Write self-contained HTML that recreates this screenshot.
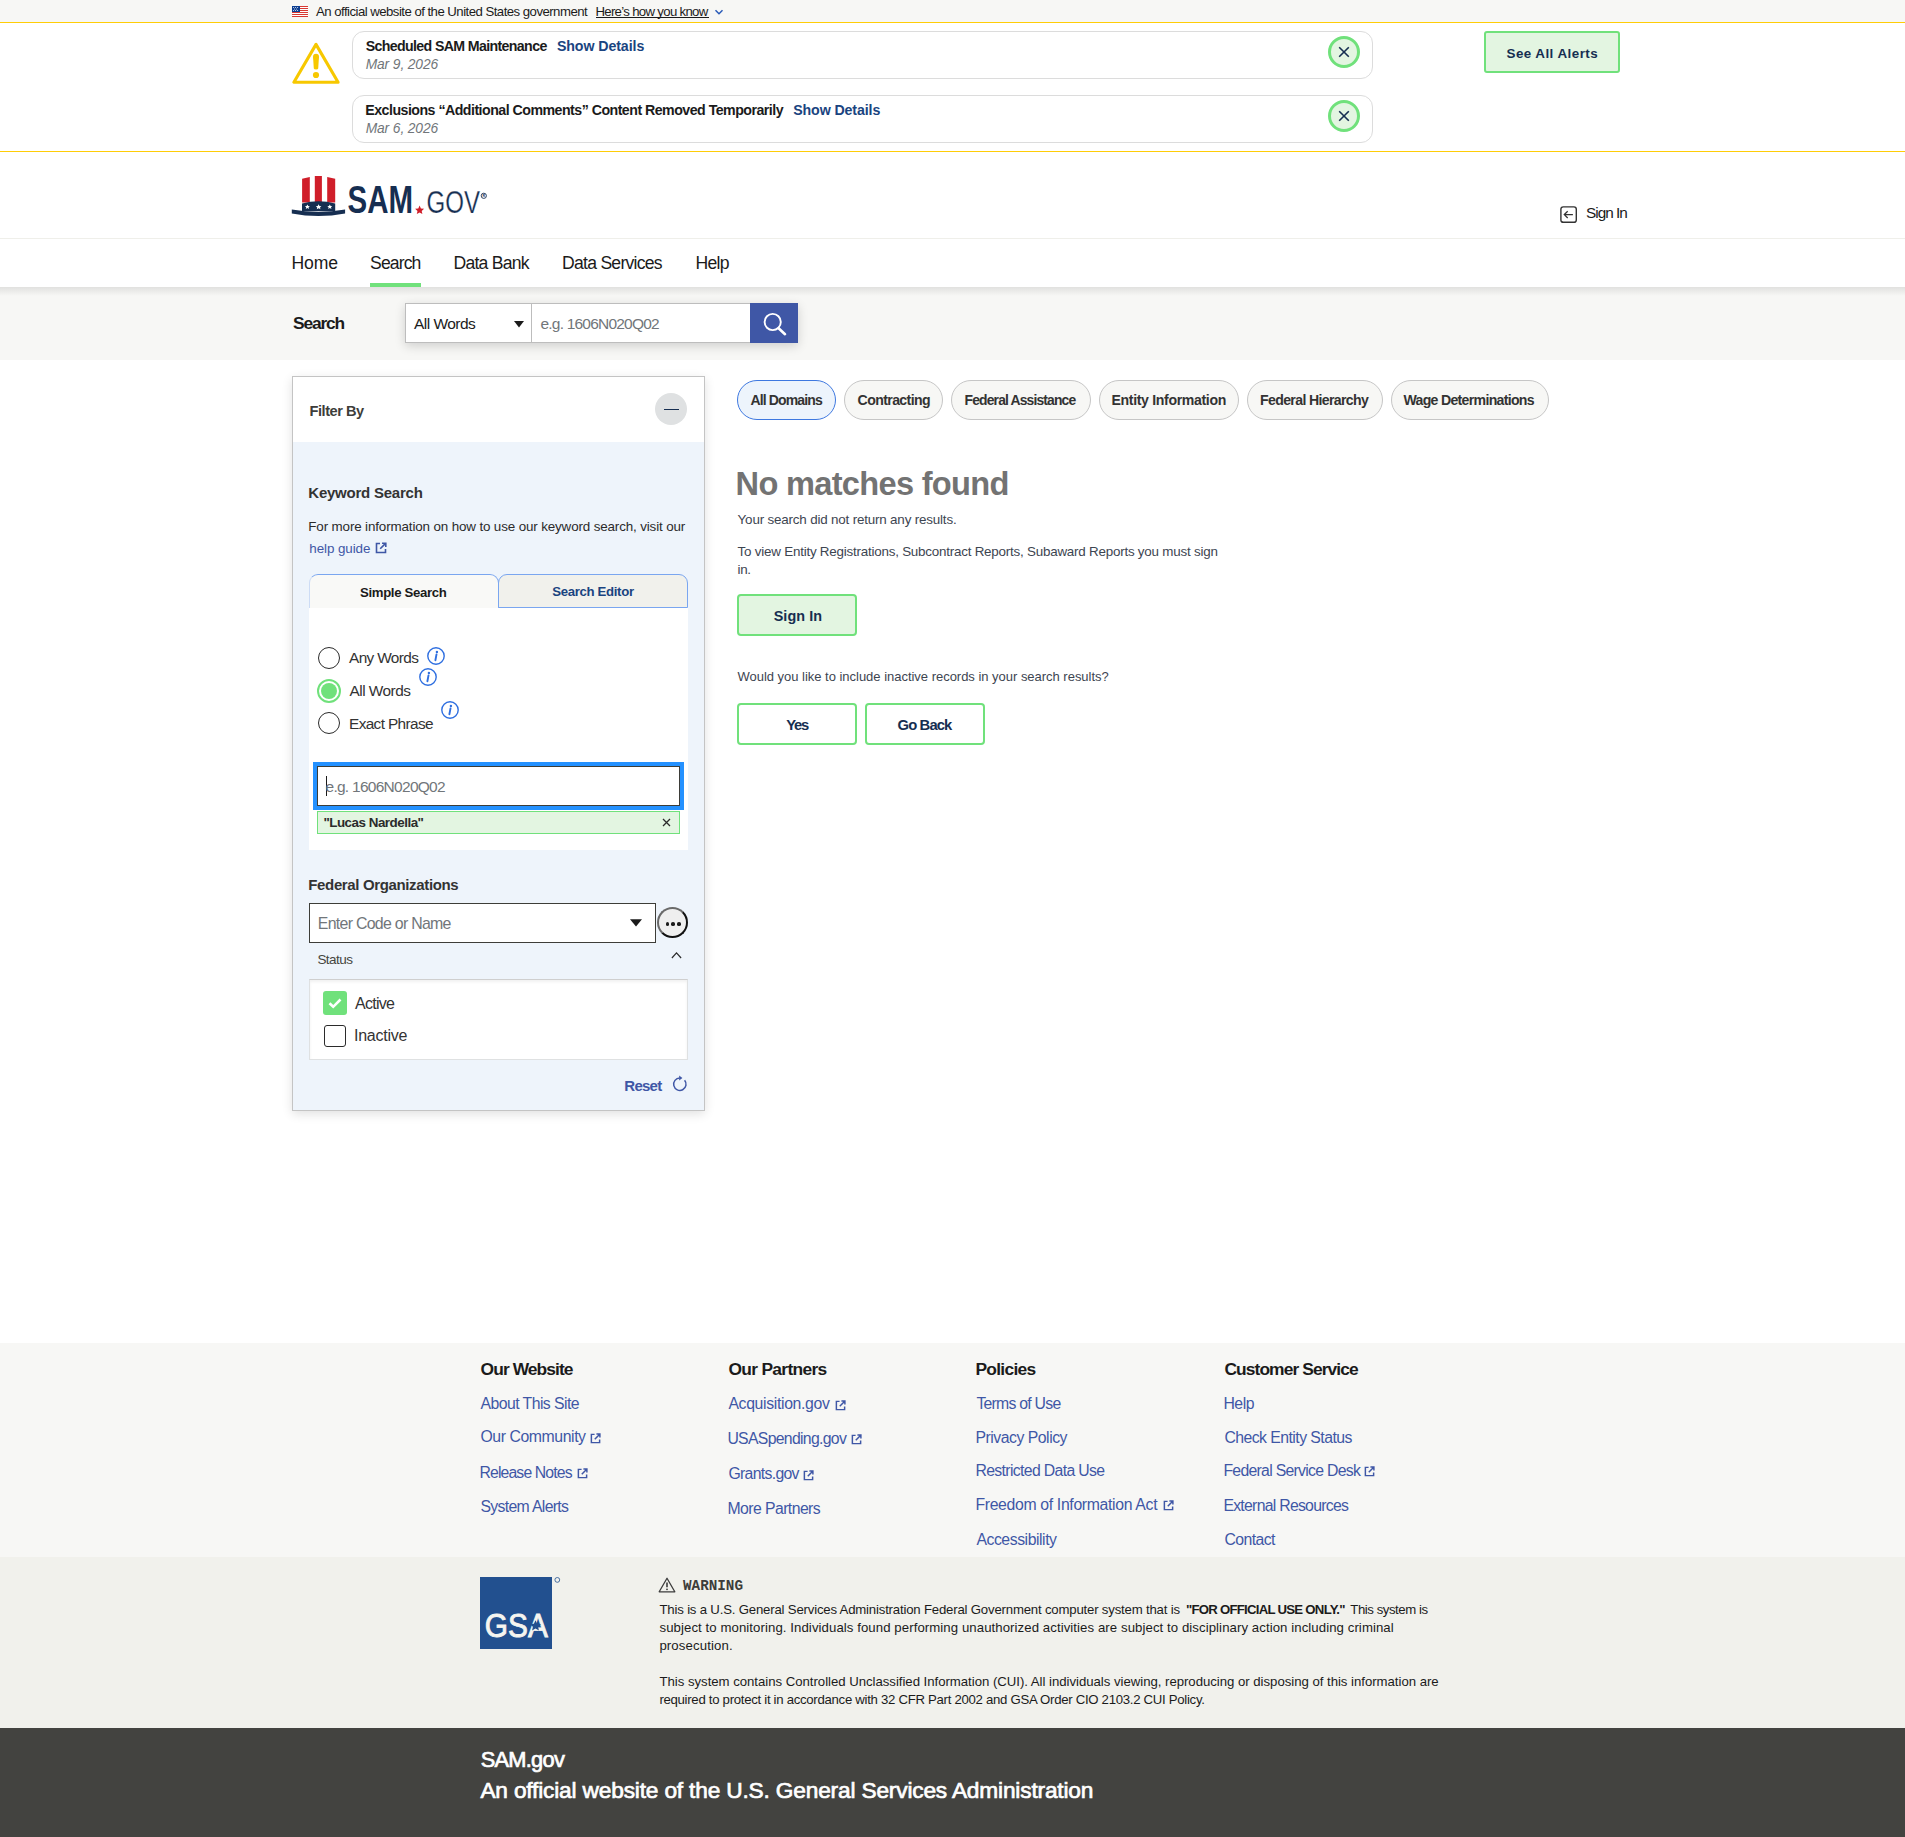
<!DOCTYPE html>
<html><head><meta charset="utf-8"><title>SAM.gov</title>
<style>
html,body{margin:0;padding:0;background:#fff;}
body{width:1905px;height:1837px;position:relative;overflow:hidden;font-family:"Liberation Sans",sans-serif;}
.b,.a,.t{position:absolute;}
.t{white-space:nowrap;}
</style></head><body>
<div class="b" style="left:0;top:0;width:1905px;height:22px;background:#f7f7f5"></div>
<div class="b" style="left:0;top:22px;width:1905px;height:1px;background:#ffcd07"></div>
<div class="b" style="left:0;top:151px;width:1905px;height:1px;background:#ffcd07"></div>
<div class="b" style="left:0;top:238px;width:1905px;height:1px;background:#efefea"></div>
<div class="b" style="left:0;top:287px;width:1905px;height:73px;background:#f7f7f5"></div>
<div class="b" style="left:0;top:287px;width:1905px;height:9px;background:linear-gradient(rgba(0,0,0,0.09),rgba(0,0,0,0))"></div>
<div class="b" style="left:370px;top:283px;width:51px;height:4px;background:#70e17b"></div>
<div class="b" style="left:0;top:1343px;width:1905px;height:214px;background:#f7f7f5"></div>
<div class="b" style="left:0;top:1557px;width:1905px;height:171px;background:#f1f1ec"></div>
<div class="b" style="left:0;top:1728px;width:1905px;height:109px;background:#434340"></div>
<svg class="a" style="left:292px;top:6px" width="16" height="11" viewBox="0 0 16 11"><rect width="16" height="11" fill="#fff"/><g fill="#d83933"><rect y="0" width="16" height="1"/><rect y="2" width="16" height="1"/><rect y="4" width="16" height="1"/><rect y="6" width="16" height="1"/><rect y="8" width="16" height="1"/><rect y="10" width="16" height="1"/></g><rect width="8" height="6" fill="#0b3d91"/><g fill="#fff"><circle cx="1.6" cy="1.4" r=".5"/><circle cx="3.6" cy="1.4" r=".5"/><circle cx="5.6" cy="1.4" r=".5"/><circle cx="2.6" cy="3" r=".5"/><circle cx="4.6" cy="3" r=".5"/><circle cx="1.6" cy="4.6" r=".5"/><circle cx="3.6" cy="4.6" r=".5"/><circle cx="5.6" cy="4.6" r=".5"/></g></svg>
<div class="b" style="left:596px;top:17px;width:113px;height:1px;background:#1b1b1b"></div>
<svg class="a" style="left:714px;top:8px" width="10" height="8" viewBox="0 0 10 8"><path d="M1.5 2.2L5 5.7 8.5 2.2" fill="none" stroke="#2a5bb8" stroke-width="1.5"/></svg>
<svg class="a" style="left:292px;top:42px" width="48" height="42" viewBox="0 0 48 42"><path d="M24 2.4L1.9 40.2H46.1Z" fill="none" stroke="#f7c800" stroke-width="3.1" stroke-linejoin="round"/><path d="M21 14.8Q21 11.8 24 11.8Q27 11.8 27 14.8L26.2 26.6Q26 27.6 24 27.6Q22 27.6 21.8 26.6Z" fill="#f7c800"/><circle cx="24" cy="33" r="3.1" fill="#f7c800"/></svg>
<div class="b" style="left:352px;top:31px;width:1021px;height:48px;border:1.5px solid #dcdcdc;border-radius:12px;box-sizing:border-box;background:#fff"></div>
<div class="b" style="left:1328px;top:36px;width:32px;height:32px;border:3px solid #70e17b;border-radius:50%;box-sizing:border-box;background:#e3f5e1"></div>
<svg class="a" style="left:1338px;top:46px" width="12" height="12" viewBox="0 0 12 12"><path d="M1.2 1.2L10.8 10.8M10.8 1.2L1.2 10.8" stroke="#162e51" stroke-width="1.6"/></svg>
<div class="b" style="left:352px;top:95px;width:1021px;height:48px;border:1.5px solid #dcdcdc;border-radius:12px;box-sizing:border-box;background:#fff"></div>
<div class="b" style="left:1328px;top:100px;width:32px;height:32px;border:3px solid #70e17b;border-radius:50%;box-sizing:border-box;background:#e3f5e1"></div>
<svg class="a" style="left:1338px;top:110px" width="12" height="12" viewBox="0 0 12 12"><path d="M1.2 1.2L10.8 10.8M10.8 1.2L1.2 10.8" stroke="#162e51" stroke-width="1.6"/></svg>
<div class="b" style="left:1484px;top:31px;width:136px;height:42px;border:2px solid #70e17b;border-radius:3px;box-sizing:border-box;background:#e3f5e1"></div>
<svg class="a" style="left:290px;top:172px" width="200" height="48" viewBox="290 172 200 48">
<g fill="#d01e2a"><path d="M302.1 178.8L309.8 176.9V202.5H302.1Z"/><path d="M314.8 176H321.9V202.5H314.8Z"/><path d="M327.2 176.9L335.2 178.8V202.5H327.2Z"/></g>
<path d="M302 211.2V203.5Q318.6 199 335.2 203.5V211.2Z" fill="#162e51"/>
<g fill="#fff"><path d="M307.4 204.4l.8 1.6 1.7.2-1.3 1.1.4 1.7-1.6-.9-1.6.9.4-1.7-1.3-1.1 1.7-.2z"/><path d="M318.6 204.2l.9 1.8 1.9.2-1.4 1.2.4 1.9-1.8-1-1.8 1 .4-1.9-1.4-1.2 1.9-.2z"/><path d="M329.8 204.4l.8 1.6 1.7.2-1.3 1.1.4 1.7-1.6-.9-1.6.9.4-1.7-1.3-1.1 1.7-.2z"/></g>
<path d="M291.8 209.6Q318.5 214.5 345.1 209.6V213.5Q318.5 218.5 291.8 213.5Z" fill="#162e51"/>
<text x="347.6" y="213" font-family="Liberation Sans" font-weight="700" font-size="38.5" fill="#162e51" textLength="65.5" lengthAdjust="spacingAndGlyphs">SAM</text>
<path d="M419.6 205.6l1.3 2.9 3.2.3-2.4 2.1.7 3.1-2.8-1.6-2.8 1.6.7-3.1-2.4-2.1 3.2-.3z" fill="#d01e2a"/>
<text x="426.6" y="213" font-family="Liberation Sans" font-weight="400" font-size="31.5" fill="#162e51" stroke="#fff" stroke-width="0.25" paint-order="normal" textLength="53.5" lengthAdjust="spacingAndGlyphs">GOV</text>
<circle cx="483.8" cy="195.8" r="2.6" fill="none" stroke="#162e51" stroke-width=".9"/><text x="482.6" y="197.4" font-family="Liberation Sans" font-size="3.6" font-weight="700" fill="#162e51">R</text>
</svg>
<svg class="a" style="left:1559px;top:205px" width="20" height="19" viewBox="0 0 20 19"><rect x="1.9" y="1.9" width="15.4" height="15.4" rx="2.4" fill="none" stroke="#333" stroke-width="1.4"/><path d="M13.9 9.6H5.6M8.7 6.2L5.3 9.6 8.7 13" fill="none" stroke="#333" stroke-width="1.3"/></svg>
<div class="b" style="left:405px;top:303px;width:393px;height:40px;box-shadow:0 3px 10px rgba(0,0,0,0.16)"></div>
<div class="b" style="left:405px;top:303px;width:127px;height:40px;border:1px solid #bdbdbd;box-sizing:border-box;background:#fff"></div>
<svg class="a" style="left:513px;top:320px" width="12" height="8" viewBox="0 0 12 8"><path d="M1 1H11L6 7.5Z" fill="#1b1b1b"/></svg>
<div class="b" style="left:531px;top:303px;width:220px;height:40px;border:1px solid #bdbdbd;box-sizing:border-box;background:#fff"></div>
<div class="b" style="left:750px;top:303px;width:48px;height:40px;background:#3f57a6"></div>
<svg class="a" style="left:760px;top:310px" width="30" height="28" viewBox="0 0 30 28"><circle cx="12.7" cy="12" r="8.1" fill="none" stroke="#fff" stroke-width="1.9"/><path d="M18.6 18.2L25 24.2" stroke="#fff" stroke-width="2.6" stroke-linecap="round"/></svg>
<div class="b" style="left:292px;top:376px;width:413px;height:735px;border:1px solid #c4c4c4;box-sizing:border-box;background:#eef4fb;box-shadow:0 3px 10px rgba(0,0,0,0.12)"></div>
<div class="b" style="left:293px;top:377px;width:411px;height:65px;background:#fff"></div>
<div class="b" style="left:655px;top:393px;width:32px;height:32px;border-radius:50%;background:#dfe1e2"></div>
<div class="b" style="left:664px;top:408.5px;width:15px;height:1.6px;background:#162e51"></div>
<svg class="a" style="left:375px;top:542px" width="12" height="12" viewBox="0 0 12 12"><path d="M5 1.5H1.5v9h9V7" fill="none" stroke="#3f57a6" stroke-width="1.6"/><path d="M7 1.2h3.8V5M10.6 1.4L5.2 6.8" fill="none" stroke="#3f57a6" stroke-width="1.6"/></svg>
<div class="b" style="left:309px;top:574px;width:190px;height:34px;border-top:1px solid #7aa6f0;border-right:1px solid #7aa6f0;border-left:1px solid rgba(122,166,240,.35);border-radius:9px 9px 0 0;box-sizing:border-box;background:#f9f9f7"></div>
<div class="b" style="left:498px;top:574px;width:190px;height:34px;border:1px solid #7aa6f0;border-radius:9px 9px 0 0;box-sizing:border-box;background:#f1f1ec"></div>
<div class="b" style="left:309px;top:608px;width:379px;height:242px;background:#fff"></div>
<div class="b" style="left:318px;top:647px;width:22px;height:22px;border:1.6px solid #2b2b2b;border-radius:50%;box-sizing:border-box"></div>
<div class="b" style="left:317px;top:679px;width:24px;height:24px;border:2.2px solid #70e17b;border-radius:50%;box-sizing:border-box"></div>
<div class="b" style="left:321px;top:683px;width:16px;height:16px;border-radius:50%;background:#70e17b"></div>
<div class="b" style="left:318px;top:712px;width:22px;height:22px;border:1.6px solid #2b2b2b;border-radius:50%;box-sizing:border-box"></div>
<svg class="a" style="left:427px;top:647px" width="18" height="18" viewBox="0 0 18 18"><circle cx="9" cy="9" r="8.2" fill="none" stroke="#2f6fe0" stroke-width="1.4"/><circle cx="9.9" cy="5" r="1.2" fill="#2f6fe0"/><path d="M9.5 7.4L8.4 13.2" stroke="#2f6fe0" stroke-width="1.9" stroke-linecap="round"/></svg>
<svg class="a" style="left:419px;top:668px" width="18" height="18" viewBox="0 0 18 18"><circle cx="9" cy="9" r="8.2" fill="none" stroke="#2f6fe0" stroke-width="1.4"/><circle cx="9.9" cy="5" r="1.2" fill="#2f6fe0"/><path d="M9.5 7.4L8.4 13.2" stroke="#2f6fe0" stroke-width="1.9" stroke-linecap="round"/></svg>
<svg class="a" style="left:441px;top:701px" width="18" height="18" viewBox="0 0 18 18"><circle cx="9" cy="9" r="8.2" fill="none" stroke="#2f6fe0" stroke-width="1.4"/><circle cx="9.9" cy="5" r="1.2" fill="#2f6fe0"/><path d="M9.5 7.4L8.4 13.2" stroke="#2f6fe0" stroke-width="1.9" stroke-linecap="round"/></svg>
<div class="b" style="left:313px;top:762px;width:371px;height:48px;background:#2491ff"></div>
<div class="b" style="left:317px;top:766px;width:363px;height:40px;border:1.5px solid #3d3d38;box-sizing:border-box;background:#fff"></div>
<div class="b" style="left:325.5px;top:776px;width:1.3px;height:20px;background:#1b1b1b"></div>
<div class="b" style="left:317px;top:810.5px;width:363px;height:23px;border:1px solid #70e17b;box-sizing:border-box;background:#e3f5e1"></div>
<svg class="a" style="left:662px;top:818px" width="9" height="9" viewBox="0 0 9 9"><path d="M1 1L8 8M8 1L1 8" stroke="#2b2b2b" stroke-width="1.3"/></svg>
<div class="b" style="left:309px;top:903px;width:347px;height:40px;border:1.5px solid #3d3d38;box-sizing:border-box;background:#fff"></div>
<svg class="a" style="left:629px;top:918px" width="14" height="10" viewBox="0 0 14 10"><path d="M1 1.2H13L7 8.6Z" fill="#1b1b1b"/></svg>
<div class="b" style="left:657px;top:907px;width:31px;height:31px;border:2px solid #1b1b1b;border-color:#6a6a6a #111 #111 #6a6a6a;transform:rotate(0deg);border-radius:50%;box-sizing:border-box;background:#efefef"></div>
<div class="b" style="left:665.65px;top:922.2px;width:3.7px;height:3.7px;border-radius:50%;background:#1b1b1b"></div>
<div class="b" style="left:671.35px;top:922.2px;width:3.7px;height:3.7px;border-radius:50%;background:#1b1b1b"></div>
<div class="b" style="left:677.15px;top:922.2px;width:3.7px;height:3.7px;border-radius:50%;background:#1b1b1b"></div>
<svg class="a" style="left:669px;top:949px" width="15" height="12" viewBox="0 0 15 12"><path d="M2.9 9L7.5 3.9 12.1 9" fill="none" stroke="#2b2b2b" stroke-width="1.2"/></svg>
<div class="b" style="left:309px;top:979px;width:379px;height:81px;border:1px solid #dfe1e2;border-top-color:#cfcfcf;box-sizing:border-box;background:#fff;box-shadow:inset 0 2px 3px rgba(0,0,0,0.06)"></div>
<div class="b" style="left:323px;top:991px;width:24px;height:24px;border-radius:3px;background:#70e17b"></div>
<svg class="a" style="left:323px;top:991px" width="24" height="24" viewBox="0 0 24 24"><path d="M6.5 12.3L10.2 15.8 17.5 8.5" fill="none" stroke="#fff" stroke-width="2.6"/></svg>
<div class="b" style="left:324px;top:1025px;width:22px;height:22px;border:1.6px solid #2b2b2b;border-radius:3px;box-sizing:border-box;background:#fff"></div>
<svg class="a" style="left:671px;top:1075px" width="18" height="18" viewBox="0 0 18 18"><path d="M13.6 5.2A6.2 6.2 0 1 1 8.8 3" fill="none" stroke="#3f57a6" stroke-width="1.5"/><path d="M8.2 0.6L11.4 3.1 8.2 5.6Z" fill="#3f57a6"/></svg>
<div class="b" style="left:737px;top:380px;width:99px;height:40px;border:1.5px solid #3e78e0;border-radius:20px;box-sizing:border-box;background:#edf4fc"></div>
<div class="b" style="left:844px;top:380px;width:99px;height:40px;border:1px solid #c6c6c6;border-radius:20px;box-sizing:border-box;background:#f7f7f5"></div>
<div class="b" style="left:951px;top:380px;width:140px;height:40px;border:1px solid #c6c6c6;border-radius:20px;box-sizing:border-box;background:#f7f7f5"></div>
<div class="b" style="left:1099px;top:380px;width:140px;height:40px;border:1px solid #c6c6c6;border-radius:20px;box-sizing:border-box;background:#f7f7f5"></div>
<div class="b" style="left:1247px;top:380px;width:136px;height:40px;border:1px solid #c6c6c6;border-radius:20px;box-sizing:border-box;background:#f7f7f5"></div>
<div class="b" style="left:1391px;top:380px;width:158px;height:40px;border:1px solid #c6c6c6;border-radius:20px;box-sizing:border-box;background:#f7f7f5"></div>
<div class="b" style="left:737px;top:594px;width:120px;height:42px;border:2px solid #70e17b;border-radius:4px;box-sizing:border-box;background:#e3f5e1"></div>
<div class="b" style="left:737px;top:703px;width:120px;height:42px;border:2px solid #70e17b;border-radius:4px;box-sizing:border-box;background:#fff"></div>
<div class="b" style="left:865px;top:703px;width:120px;height:42px;border:2px solid #70e17b;border-radius:4px;box-sizing:border-box;background:#fff"></div>
<svg class="a" style="left:590.3px;top:1433px" width="11" height="11" viewBox="0 0 12 12"><path d="M5 1.5H1.5v9h9V7" fill="none" stroke="#3f57a6" stroke-width="1.6"/><path d="M7 1.2h3.8V5M10.6 1.4L5.2 6.8" fill="none" stroke="#3f57a6" stroke-width="1.6"/></svg>
<svg class="a" style="left:576.9px;top:1467.5px" width="11" height="11" viewBox="0 0 12 12"><path d="M5 1.5H1.5v9h9V7" fill="none" stroke="#3f57a6" stroke-width="1.6"/><path d="M7 1.2h3.8V5M10.6 1.4L5.2 6.8" fill="none" stroke="#3f57a6" stroke-width="1.6"/></svg>
<svg class="a" style="left:834.7px;top:1399.8px" width="11" height="11" viewBox="0 0 12 12"><path d="M5 1.5H1.5v9h9V7" fill="none" stroke="#3f57a6" stroke-width="1.6"/><path d="M7 1.2h3.8V5M10.6 1.4L5.2 6.8" fill="none" stroke="#3f57a6" stroke-width="1.6"/></svg>
<svg class="a" style="left:850.6px;top:1434.3px" width="11" height="11" viewBox="0 0 12 12"><path d="M5 1.5H1.5v9h9V7" fill="none" stroke="#3f57a6" stroke-width="1.6"/><path d="M7 1.2h3.8V5M10.6 1.4L5.2 6.8" fill="none" stroke="#3f57a6" stroke-width="1.6"/></svg>
<svg class="a" style="left:803px;top:1469.6px" width="11" height="11" viewBox="0 0 12 12"><path d="M5 1.5H1.5v9h9V7" fill="none" stroke="#3f57a6" stroke-width="1.6"/><path d="M7 1.2h3.8V5M10.6 1.4L5.2 6.8" fill="none" stroke="#3f57a6" stroke-width="1.6"/></svg>
<svg class="a" style="left:1162.6px;top:1500px" width="11" height="11" viewBox="0 0 12 12"><path d="M5 1.5H1.5v9h9V7" fill="none" stroke="#3f57a6" stroke-width="1.6"/><path d="M7 1.2h3.8V5M10.6 1.4L5.2 6.8" fill="none" stroke="#3f57a6" stroke-width="1.6"/></svg>
<svg class="a" style="left:1364.4px;top:1466px" width="11" height="11" viewBox="0 0 12 12"><path d="M5 1.5H1.5v9h9V7" fill="none" stroke="#3f57a6" stroke-width="1.6"/><path d="M7 1.2h3.8V5M10.6 1.4L5.2 6.8" fill="none" stroke="#3f57a6" stroke-width="1.6"/></svg>
<svg class="a" style="left:480px;top:1577px" width="82" height="72" viewBox="0 0 82 72"><rect width="72" height="72" fill="#22508f"/>
<text x="4.8" y="60.2" font-family="Liberation Sans" font-size="34" fill="#f5f5f0" stroke="#f5f5f0" stroke-width="0.9" textLength="63" lengthAdjust="spacingAndGlyphs">GSA</text>
<path d="M55.5 43.2l1.6 3.6 3.9.4-2.9 2.6.8 3.8-3.4-2-3.4 2 .8-3.8-2.9-2.6 3.9-.4z" fill="#22508f"/>
<circle cx="77.3" cy="2.9" r="2.4" fill="none" stroke="#22508f" stroke-width=".8"/></svg>
<svg class="a" style="left:658px;top:1577px" width="18" height="16" viewBox="0 0 18 16"><path d="M9 1.2L1.2 14.8H16.8Z" fill="none" stroke="#3d3d3d" stroke-width="1.3" stroke-linejoin="round"/><path d="M9 5.6V10.2" stroke="#3d3d3d" stroke-width="1.6"/><circle cx="9" cy="12.3" r=".9" fill="#3d3d3d"/></svg>
<div class="t" style="left:316.00px;top:3.00px;font-size:13.20px;line-height:17px;letter-spacing:-0.529px;color:#1b1b1b;">An official website of the United States government</div>
<div class="t" style="left:595.40px;top:3.00px;font-size:13.20px;line-height:17px;letter-spacing:-0.677px;color:#1b1b1b;">Here’s how you know</div>
<div class="t" style="left:365.70px;top:37.00px;font-size:14.20px;line-height:18px;letter-spacing:-0.646px;color:#1b1b1b;font-weight:700;">Scheduled SAM Maintenance</div>
<div class="t" style="left:556.90px;top:37.00px;font-size:14.20px;line-height:18px;letter-spacing:-0.082px;color:#1a4480;font-weight:700;">Show Details</div>
<div class="t" style="left:365.70px;top:55.60px;font-size:13.80px;line-height:18px;letter-spacing:-0.115px;color:#71767a;font-style:italic;">Mar 9, 2026</div>
<div class="t" style="left:365.30px;top:101.00px;font-size:14.20px;line-height:18px;letter-spacing:-0.522px;color:#1b1b1b;font-weight:700;">Exclusions “Additional Comments” Content Removed Temporarily</div>
<div class="t" style="left:793.20px;top:101.00px;font-size:14.20px;line-height:18px;letter-spacing:-0.110px;color:#1a4480;font-weight:700;">Show Details</div>
<div class="t" style="left:365.70px;top:119.60px;font-size:13.80px;line-height:18px;letter-spacing:-0.115px;color:#71767a;font-style:italic;">Mar 6, 2026</div>
<div class="t" style="left:1506.50px;top:44.90px;font-size:13.40px;line-height:17px;letter-spacing:0.447px;color:#162e51;font-weight:700;">See All Alerts</div>
<div class="t" style="left:1586.10px;top:202.90px;font-size:15.33px;line-height:20px;letter-spacing:-0.992px;color:#1b1b1b;">Sign In</div>
<div class="t" style="left:291.40px;top:252.00px;font-size:17.60px;line-height:23px;letter-spacing:-0.082px;color:#1b1b1b;">Home</div>
<div class="t" style="left:370.10px;top:252.00px;font-size:17.60px;line-height:23px;letter-spacing:-0.892px;color:#1b1b1b;">Search</div>
<div class="t" style="left:453.50px;top:252.00px;font-size:17.60px;line-height:23px;letter-spacing:-0.757px;color:#1b1b1b;">Data Bank</div>
<div class="t" style="left:562.10px;top:252.00px;font-size:17.60px;line-height:23px;letter-spacing:-0.751px;color:#1b1b1b;">Data Services</div>
<div class="t" style="left:695.40px;top:252.00px;font-size:17.60px;line-height:23px;letter-spacing:-0.666px;color:#1b1b1b;">Help</div>
<div class="t" style="left:293.00px;top:312.00px;font-size:17.38px;line-height:23px;letter-spacing:-1.160px;color:#1b1b1b;font-weight:700;">Search</div>
<div class="t" style="left:414.00px;top:314.00px;font-size:15.50px;line-height:20px;letter-spacing:-0.535px;color:#1b1b1b;">All Words</div>
<div class="t" style="left:540.50px;top:313.80px;font-size:15.50px;line-height:20px;letter-spacing:-0.792px;color:#71767a;">e.g. 1606N020Q02</div>
<div class="t" style="left:309.60px;top:401.70px;font-size:14.60px;line-height:19px;letter-spacing:-0.484px;color:#3d3d3a;font-weight:700;">Filter By</div>
<div class="t" style="left:308.30px;top:483.00px;font-size:15.00px;line-height:20px;letter-spacing:-0.230px;color:#333333;font-weight:700;">Keyword Search</div>
<div class="t" style="left:308.30px;top:518.40px;font-size:13.40px;line-height:17px;letter-spacing:-0.136px;color:#2b2b2b;">For more information on how to use our keyword search, visit our</div>
<div class="t" style="left:309.30px;top:539.80px;font-size:13.40px;line-height:17px;letter-spacing:-0.073px;color:#3f57a6;">help guide</div>
<div class="t" style="left:360.00px;top:583.50px;font-size:13.20px;line-height:17px;letter-spacing:-0.344px;color:#1b1b1b;font-weight:700;">Simple Search</div>
<div class="t" style="left:552.30px;top:582.60px;font-size:13.20px;line-height:17px;letter-spacing:-0.334px;color:#1a4480;font-weight:700;">Search Editor</div>
<div class="t" style="left:349.00px;top:647.80px;font-size:15.40px;line-height:20px;letter-spacing:-0.636px;color:#333333;">Any Words</div>
<div class="t" style="left:349.50px;top:680.60px;font-size:15.40px;line-height:20px;letter-spacing:-0.522px;color:#333333;">All Words</div>
<div class="t" style="left:349.00px;top:713.60px;font-size:15.40px;line-height:20px;letter-spacing:-0.634px;color:#333333;">Exact Phrase</div>
<div class="t" style="left:325.50px;top:777.00px;font-size:15.50px;line-height:20px;letter-spacing:-0.725px;color:#71767a;">e.g. 1606N020Q02</div>
<div class="t" style="left:323.40px;top:813.70px;font-size:13.40px;line-height:17px;letter-spacing:-0.494px;color:#2b2b2b;font-weight:700;">"Lucas Nardella"</div>
<div class="t" style="left:308.30px;top:875.00px;font-size:15.00px;line-height:20px;letter-spacing:-0.360px;color:#333333;font-weight:700;">Federal Organizations</div>
<div class="t" style="left:317.80px;top:913.00px;font-size:15.90px;line-height:21px;letter-spacing:-0.711px;color:#71767a;">Enter Code or Name</div>
<div class="t" style="left:317.40px;top:951.00px;font-size:13.50px;line-height:18px;letter-spacing:-0.544px;color:#454540;">Status</div>
<div class="t" style="left:355.00px;top:993.00px;font-size:16.00px;line-height:21px;letter-spacing:-0.734px;color:#333333;">Active</div>
<div class="t" style="left:354.00px;top:1025.30px;font-size:16.00px;line-height:21px;letter-spacing:-0.249px;color:#333333;">Inactive</div>
<div class="t" style="left:624.30px;top:1076.00px;font-size:15.00px;line-height:20px;letter-spacing:-0.740px;color:#3f57a6;font-weight:700;">Reset</div>
<div class="t" style="left:750.40px;top:391.10px;font-size:14.00px;line-height:18px;letter-spacing:-0.862px;color:#333333;font-weight:700;">All Domains</div>
<div class="t" style="left:857.60px;top:391.10px;font-size:14.10px;line-height:18px;letter-spacing:-0.607px;color:#333333;font-weight:700;">Contracting</div>
<div class="t" style="left:964.60px;top:391.10px;font-size:13.89px;line-height:18px;letter-spacing:-0.844px;color:#333333;font-weight:700;">Federal Assistance</div>
<div class="t" style="left:1111.50px;top:391.10px;font-size:14.10px;line-height:18px;letter-spacing:-0.339px;color:#333333;font-weight:700;">Entity Information</div>
<div class="t" style="left:1260.00px;top:391.10px;font-size:14.10px;line-height:18px;letter-spacing:-0.640px;color:#333333;font-weight:700;">Federal Hierarchy</div>
<div class="t" style="left:1403.40px;top:391.10px;font-size:14.10px;line-height:18px;letter-spacing:-0.685px;color:#333333;font-weight:700;">Wage Determinations</div>
<div class="t" style="left:735.60px;top:463.20px;font-size:32.60px;line-height:42px;letter-spacing:-0.691px;color:#737373;font-weight:700;">No matches found</div>
<div class="t" style="left:737.60px;top:511.30px;font-size:13.40px;line-height:17px;letter-spacing:-0.178px;color:#3d4551;">Your search did not return any results.</div>
<div class="t" style="left:737.60px;top:542.60px;font-size:13.40px;line-height:17px;letter-spacing:-0.221px;color:#3d4551;">To view Entity Registrations, Subcontract Reports, Subaward Reports you must sign</div>
<div class="t" style="left:737.60px;top:560.70px;font-size:13.40px;line-height:17px;letter-spacing:-0.402px;color:#3d4551;">in.</div>
<div class="t" style="left:773.70px;top:607.10px;font-size:14.40px;line-height:19px;letter-spacing:0.054px;color:#162e51;font-weight:700;">Sign In</div>
<div class="t" style="left:737.50px;top:668.40px;font-size:13.00px;line-height:17px;letter-spacing:-0.021px;color:#3d4551;">Would you like to include inactive records in your search results?</div>
<div class="t" style="left:786.20px;top:715.90px;font-size:14.78px;line-height:19px;letter-spacing:-1.276px;color:#162e51;font-weight:700;">Yes</div>
<div class="t" style="left:897.60px;top:715.90px;font-size:14.80px;line-height:19px;letter-spacing:-0.884px;color:#162e51;font-weight:700;">Go Back</div>
<div class="t" style="left:480.60px;top:1357.90px;font-size:17.40px;line-height:23px;letter-spacing:-0.924px;color:#1b1b1b;font-weight:700;">Our Website</div>
<div class="t" style="left:728.40px;top:1357.90px;font-size:17.40px;line-height:23px;letter-spacing:-0.686px;color:#1b1b1b;font-weight:700;">Our Partners</div>
<div class="t" style="left:975.40px;top:1357.90px;font-size:17.40px;line-height:23px;letter-spacing:-0.694px;color:#1b1b1b;font-weight:700;">Policies</div>
<div class="t" style="left:1224.40px;top:1357.90px;font-size:17.40px;line-height:23px;letter-spacing:-0.908px;color:#1b1b1b;font-weight:700;">Customer Service</div>
<div class="t" style="left:480.50px;top:1392.90px;font-size:15.80px;line-height:21px;letter-spacing:-0.553px;color:#3f57a6;">About This Site</div>
<div class="t" style="left:480.50px;top:1426.40px;font-size:15.80px;line-height:21px;letter-spacing:-0.425px;color:#3f57a6;">Our Community</div>
<div class="t" style="left:479.50px;top:1461.60px;font-size:15.78px;line-height:21px;letter-spacing:-0.865px;color:#3f57a6;">Release Notes</div>
<div class="t" style="left:480.50px;top:1496.30px;font-size:15.80px;line-height:21px;letter-spacing:-0.678px;color:#3f57a6;">System Alerts</div>
<div class="t" style="left:728.40px;top:1393.20px;font-size:15.80px;line-height:21px;letter-spacing:-0.339px;color:#3f57a6;">Acquisition.gov</div>
<div class="t" style="left:727.40px;top:1428.20px;font-size:15.80px;line-height:21px;letter-spacing:-0.693px;color:#3f57a6;">USASpending.gov</div>
<div class="t" style="left:728.40px;top:1462.80px;font-size:15.80px;line-height:21px;letter-spacing:-0.685px;color:#3f57a6;">Grants.gov</div>
<div class="t" style="left:727.40px;top:1497.50px;font-size:15.80px;line-height:21px;letter-spacing:-0.565px;color:#3f57a6;">More Partners</div>
<div class="t" style="left:976.40px;top:1393.20px;font-size:15.80px;line-height:21px;letter-spacing:-0.751px;color:#3f57a6;">Terms of Use</div>
<div class="t" style="left:975.40px;top:1427.20px;font-size:15.80px;line-height:21px;letter-spacing:-0.478px;color:#3f57a6;">Privacy Policy</div>
<div class="t" style="left:975.40px;top:1460.20px;font-size:15.80px;line-height:21px;letter-spacing:-0.648px;color:#3f57a6;">Restricted Data Use</div>
<div class="t" style="left:975.40px;top:1494.20px;font-size:15.80px;line-height:21px;letter-spacing:-0.336px;color:#3f57a6;">Freedom of Information Act</div>
<div class="t" style="left:976.40px;top:1529.00px;font-size:15.80px;line-height:21px;letter-spacing:-0.452px;color:#3f57a6;">Accessibility</div>
<div class="t" style="left:1223.40px;top:1393.20px;font-size:15.80px;line-height:21px;letter-spacing:-0.468px;color:#3f57a6;">Help</div>
<div class="t" style="left:1224.40px;top:1427.20px;font-size:15.80px;line-height:21px;letter-spacing:-0.547px;color:#3f57a6;">Check Entity Status</div>
<div class="t" style="left:1223.40px;top:1460.20px;font-size:15.80px;line-height:21px;letter-spacing:-0.711px;color:#3f57a6;">Federal Service Desk</div>
<div class="t" style="left:1223.40px;top:1494.80px;font-size:15.80px;line-height:21px;letter-spacing:-0.726px;color:#3f57a6;">External Resources</div>
<div class="t" style="left:1224.40px;top:1529.00px;font-size:15.80px;line-height:21px;letter-spacing:-0.575px;color:#3f57a6;">Contact</div>
<div class="t" style="left:683.00px;top:1577.40px;font-size:14.30px;line-height:19px;letter-spacing:-0.013px;color:#3d3d3a;font-weight:700;font-family:'Liberation Mono',monospace;">WARNING</div>
<div class="t" style="left:659.50px;top:1601.40px;font-size:13.20px;line-height:17px;letter-spacing:-0.190px;color:#1b1b1b;">This is a U.S. General Services Administration Federal Government computer system that is</div>
<div class="t" style="left:1185.90px;top:1601.40px;font-size:13.20px;line-height:17px;letter-spacing:-0.740px;color:#1b1b1b;font-weight:700;">"FOR OFFICIAL USE ONLY."</div>
<div class="t" style="left:1350.30px;top:1601.40px;font-size:13.20px;line-height:17px;letter-spacing:-0.449px;color:#1b1b1b;">This system is</div>
<div class="t" style="left:659.50px;top:1619.20px;font-size:13.20px;line-height:17px;letter-spacing:0.078px;color:#1b1b1b;">subject to monitoring. Individuals found performing unauthorized activities are subject to disciplinary action including criminal</div>
<div class="t" style="left:659.40px;top:1637.20px;font-size:13.20px;line-height:17px;letter-spacing:0.120px;color:#1b1b1b;">prosecution.</div>
<div class="t" style="left:659.50px;top:1673.40px;font-size:13.20px;line-height:17px;letter-spacing:-0.027px;color:#1b1b1b;">This system contains Controlled Unclassified Information (CUI). All individuals viewing, reproducing or disposing of this information are</div>
<div class="t" style="left:659.40px;top:1690.90px;font-size:13.20px;line-height:17px;letter-spacing:-0.292px;color:#1b1b1b;">required to protect it in accordance with 32 CFR Part 2002 and GSA Order CIO 2103.2 CUI Policy.</div>
<div class="t" style="left:480.70px;top:1745.70px;font-size:21.80px;line-height:28px;letter-spacing:-0.722px;color:#ffffff;-webkit-text-stroke:0.7px #fff;">SAM.gov</div>
<div class="t" style="left:480.40px;top:1774.60px;font-size:22.70px;line-height:30px;letter-spacing:-0.174px;color:#ffffff;-webkit-text-stroke:0.7px #fff;">An official website of the U.S. General Services Administration</div>
</body></html>
